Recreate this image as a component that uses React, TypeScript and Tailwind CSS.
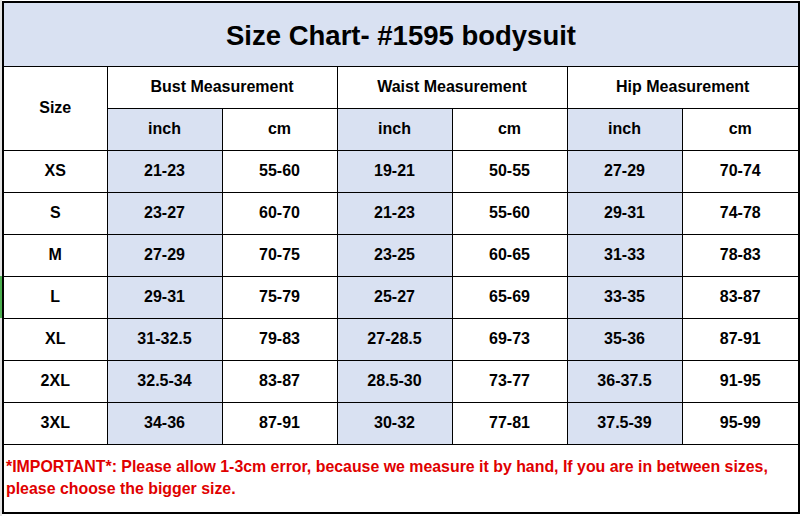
import React from 'react';

const rows = [
  ['XS', '21-23', '55-60', '19-21', '50-55', '27-29', '70-74'],
  ['S', '23-27', '60-70', '21-23', '55-60', '29-31', '74-78'],
  ['M', '27-29', '70-75', '23-25', '60-65', '31-33', '78-83'],
  ['L', '29-31', '75-79', '25-27', '65-69', '33-35', '83-87'],
  ['XL', '31-32.5', '79-83', '27-28.5', '69-73', '35-36', '87-91'],
  ['2XL', '32.5-34', '83-87', '28.5-30', '73-77', '36-37.5', '91-95'],
  ['3XL', '34-36', '87-91', '30-32', '77-81', '37.5-39', '95-99'],
];

const groups = ['Bust Measurement', 'Waist Measurement', 'Hip Measurement'];

const cell = 'border border-black text-center align-middle';
const blue = 'bg-[#d9e1f2]';

export default function App() {
  return (
    <div
      className="flex w-[800px] h-[516px] bg-white text-black font-bold overflow-hidden"
      style={{ fontFamily: '"Liberation Sans", Arial, sans-serif' }}
    >
      {/* excel row-header strip */}
      <div className="flex flex-col w-[2px] shrink-0 bg-[#e3e3e3]">
        <div className="h-[276px]" />
        <div className="h-[42px] bg-[#4caf50]" />
      </div>

      <div className="flex flex-col pt-[1px]">
        <table className="table-fixed border-collapse border-2 border-black w-[796px]">
          <colgroup>
            <col className="w-[104px]" />
            <col className="w-[115px]" />
            <col className="w-[115px]" />
            <col className="w-[115px]" />
            <col className="w-[115px]" />
            <col className="w-[115px]" />
            <col className="w-[117px]" />
          </colgroup>
          <tbody>
            <tr className="h-[64px]">
              <td colSpan={7} className={`${cell} ${blue} text-[27.5px] pt-[2px]`}>
                Size Chart- #1595 bodysuit
              </td>
            </tr>
            <tr className="h-[42px]">
              <td rowSpan={2} className={`${cell} text-[16px]`}>
                Size
              </td>
              {groups.map((g) => (
                <td key={g} colSpan={2} className={`${cell} text-[16px]`}>
                  {g}
                </td>
              ))}
            </tr>
            <tr className="h-[42px]">
              {groups.map((g) => (
                <React.Fragment key={g}>
                  <td className={`${cell} ${blue} text-[16px]`}>inch</td>
                  <td className={`${cell} text-[16px]`}>cm</td>
                </React.Fragment>
              ))}
            </tr>
            {rows.map((r) => (
              <tr key={r[0]} className="h-[42px]">
                {r.map((v, i) => (
                  <td
                    key={i}
                    className={`${cell} text-[16px] ${i % 2 === 1 ? blue : ''}`}
                  >
                    {v}
                  </td>
                ))}
              </tr>
            ))}
            <tr className="h-[69px]">
              <td colSpan={7} className={`${cell} text-left text-[15.9px] leading-[22px] text-[#e00000] pl-[2px] whitespace-nowrap`}>
                *IMPORTANT*: Please allow 1-3cm error, because we measure it by hand, If you are in between sizes,
                <br />
                please choose the bigger size.
              </td>
            </tr>
          </tbody>
        </table>
      </div>
    </div>
  );
}
